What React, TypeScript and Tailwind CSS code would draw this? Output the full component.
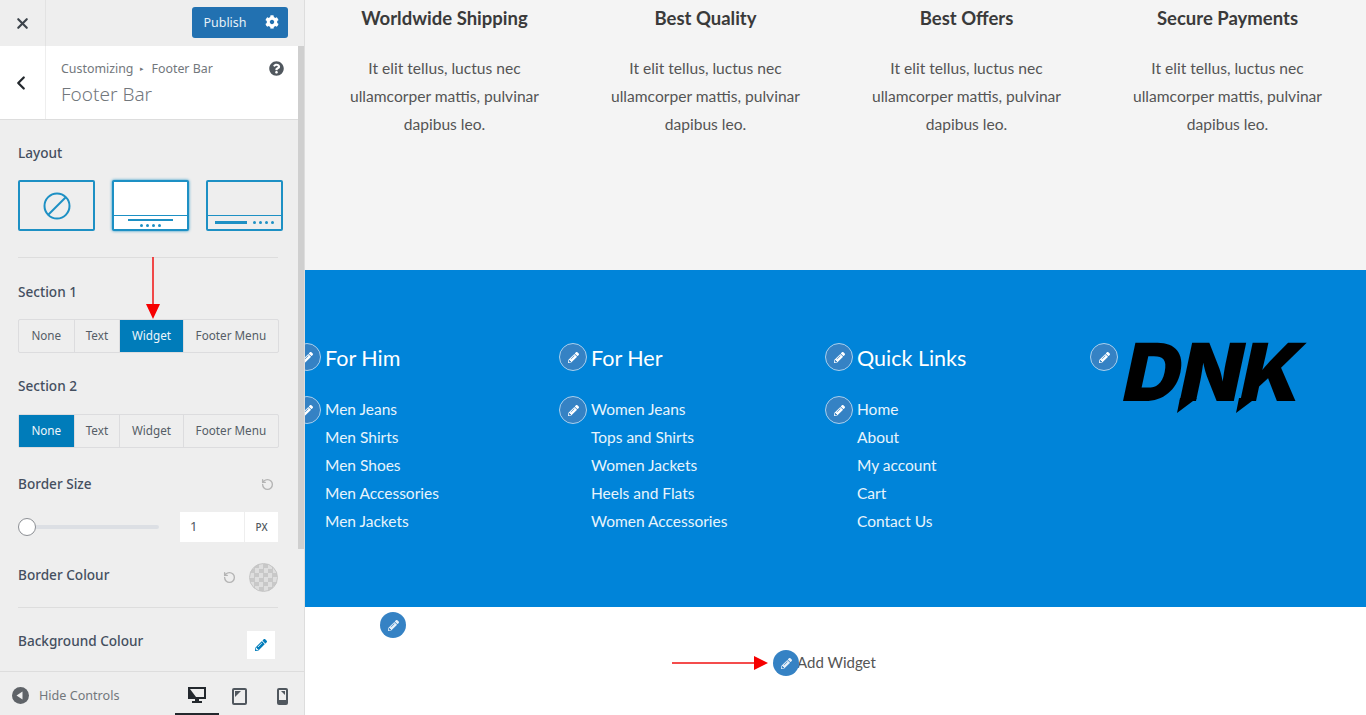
import React from 'react';
import { FaCog, FaPencilAlt, FaQuestionCircle } from 'react-icons/fa';
import { ChevronLeft, RotateCcw, X } from 'lucide-react';

const sideFont = { fontFamily: '"Noto Sans", sans-serif' };

const features = ['Worldwide Shipping', 'Best Quality', 'Best Offers', 'Secure Payments'];

const footerCols = [
  { title: 'For Him', links: ['Men Jeans', 'Men Shirts', 'Men Shoes', 'Men Accessories', 'Men Jackets'] },
  { title: 'For Her', links: ['Women Jeans', 'Tops and Shirts', 'Women Jackets', 'Heels and Flats', 'Women Accessories'] },
  { title: 'Quick Links', links: ['Home', 'About', 'My account', 'Cart', 'Contact Us'] },
];

const Segmented = ({ active }: { active: string }) => {
  const items = [
    { label: 'None', w: 'w-[55px]' },
    { label: 'Text', w: 'w-[46px]' },
    { label: 'Widget', w: 'w-[64px]' },
    { label: 'Footer Menu', w: 'w-[96px]' },
  ];
  return (
    <div className="flex h-[34px] w-[261px] rounded-[2px] border border-[#dcdcde] text-[11.7px]">
      {items.map((item, i) => (
        <div
          key={item.label}
          className={`${item.w} flex items-center justify-center ${i > 0 ? 'border-l border-[#dcdcde]' : ''} ${
            item.label === active ? 'bg-[#007cba] text-[#eef6fb]' : 'text-[#555d66]'
          }`}
        >
          {item.label}
        </div>
      ))}
    </div>
  );
};

const EditDot = ({ className }: { className: string }) => (
  <span className={`absolute flex h-[28px] w-[28px] items-center justify-center rounded-full border-[1.5px] border-[#a9d0ee] bg-[#3582c4] text-white ${className}`}>
    <FaPencilAlt size={11} />
  </span>
);

const PlainDot = ({ className }: { className: string }) => (
  <span className={`absolute flex h-[26px] w-[26px] items-center justify-center rounded-full bg-[#3582c4] text-[#e6f0f9] ${className}`}>
    <FaPencilAlt size={11} />
  </span>
);

const App = () => {
  return (
    <div className="relative flex h-[715px] w-[1366px] overflow-hidden bg-white">
      {/* customizer sidebar */}
      <aside className="relative flex h-full w-[305px] shrink-0 flex-col border-r border-[#dddddd] bg-[#eeeeee]" style={sideFont}>
        <div className="flex h-[46px] shrink-0 items-center">
          <div className="flex h-full w-[46px] items-center justify-center border-r border-[#e2e2e2] text-[#3c434a]">
            <X size={17} strokeWidth={3} />
          </div>
          <div className="mb-[2px] ml-auto mr-[16px] flex h-[31px] w-[96px] items-center rounded-[3px] bg-[#2271b1] text-[12.5px] text-[#e8f1f8]">
            <span className="mt-[3px] w-[66px] text-center">Publish</span>
            <FaCog size={14} className="ml-[7px] text-white" />
          </div>
        </div>

        <div className="flex min-h-0 flex-1">
          <div className="flex w-[298px] flex-col">
            <div className="flex h-[74px] shrink-0 border-b border-[#dddddd] bg-white">
              <div className="flex w-[46px] items-center justify-center border-r border-[#eeeeee] pr-[4px] text-[#23282d]">
                <ChevronLeft size={22} strokeWidth={2.5} />
              </div>
              <div className="relative flex-1 pl-[15px] pt-[13px] text-[#72777c]">
                <div className="flex items-center text-[12.4px] leading-[20px]">
                  Customizing
                  <span className="mx-[7px] text-[7px]">▸</span>
                  Footer Bar
                </div>
                <div className="mt-[2px] text-[19px] font-light leading-[26px]">Footer Bar</div>
                <FaQuestionCircle size={15} className="absolute right-[14px] top-[15px] text-[#50575e]" />
              </div>
            </div>

            <div className="pl-[18px] pt-[23px] text-[13.6px] text-[#444f5f]">
              <div className="font-medium leading-[20px]">Layout</div>
              <div className="mt-[17px] flex gap-[17px]">
                <div className="flex h-[51px] w-[77px] shrink-0 items-center justify-center rounded-[2px] border-2 border-[#1d90c4]">
                  <svg width="28" height="28" viewBox="0 0 28 28" fill="none" stroke="#1d90c4" strokeWidth="2">
                    <circle cx="14" cy="14" r="12.5" />
                    <path d="M5 23L23 5" />
                  </svg>
                </div>
                <div className="flex h-[51px] w-[77px] shrink-0 flex-col justify-end rounded-[2px] border-2 border-[#1d90c4] bg-white shadow-[0_0_3px_#1d90c4]">
                  <div className="flex h-[14px] flex-col items-center gap-[2px] border-t border-[#1d90c4] pt-[3px]">
                    <div className="h-[2px] w-[45px] bg-[#1d90c4]" />
                    <div className="mt-[1px] flex gap-[3px]">
                      {[0, 1, 2, 3].map((d) => <i key={d} className="h-[3px] w-[3px] rounded-full bg-[#1d90c4]" />)}
                    </div>
                  </div>
                </div>
                <div className="flex h-[51px] w-[77px] shrink-0 flex-col justify-end rounded-[2px] border-2 border-[#1d90c4]">
                  <div className="flex h-[14px] items-center justify-between border-t border-[#1d90c4] px-[7px]">
                    <div className="h-[3px] w-[32px] bg-[#1d90c4]" />
                    <div className="flex gap-[3px]">
                      {[0, 1, 2, 3].map((d) => <i key={d} className="h-[3px] w-[3px] rounded-full bg-[#1d90c4]" />)}
                    </div>
                  </div>
                </div>
              </div>

              <div className="mt-[26px] h-px w-[260px] bg-[#dddddd]" />

              <div className="mt-[24px] font-medium leading-[20px]">Section 1</div>
              <div className="mt-[17px]"><Segmented active="Widget" /></div>

              <div className="mt-[23px] font-medium leading-[20px]">Section 2</div>
              <div className="mt-[18px]"><Segmented active="None" /></div>

              <div className="mt-[26px] flex w-[256px] items-center justify-between font-medium leading-[20px]">
                Border Size
                <RotateCcw size={13} strokeWidth={2.5} className="text-[#b4b4b4]" />
              </div>
              <div className="mt-[18px] flex w-[260px] items-center">
                <div className="relative h-[4px] w-[141px] rounded bg-[#dcdfe4]">
                  <span className="absolute left-0 top-[-7px] h-[18px] w-[18px] rounded-full border border-[#8c8f94] bg-white" />
                </div>
                <div className="ml-[21px] flex h-[30px] w-[98px] bg-white text-[13px] text-[#50575e]">
                  <div className="flex w-[65px] items-center border-r border-[#eeeeee] pl-[10px]">1</div>
                  <div className="flex flex-1 items-center justify-center text-[10px] font-medium">PX</div>
                </div>
              </div>

              <div className="mt-[21px] flex w-[260px] items-center font-medium">
                <span className="mb-[4px]">Border Colour</span>
                <RotateCcw size={13} strokeWidth={2.5} className="ml-auto mr-[13px] text-[#b4b4b4]" />
                <span className="h-[29px] w-[29px] rounded-full border border-[#c4c4c4] bg-[repeating-conic-gradient(#c8c8c8_0%_25%,#dedede_0%_50%)] bg-[length:9px_9px]" />
              </div>
              <div className="mt-[15px] h-px w-[260px] bg-[#dddddd]" />
              <div className="mt-[23px] flex w-[257px] items-center justify-between font-medium">
                <span className="mb-[8px]">Background Colour</span>
                <span className="flex h-[28px] w-[28px] items-center justify-center bg-white text-[#007cba]">
                  <FaPencilAlt size={12} />
                </span>
              </div>
            </div>
          </div>
          <div className="w-[6px] bg-[#eeeeee]">
            <div className="h-[503px] bg-[#cfcfcf]" />
          </div>
        </div>

        {/* bottom controls */}
        <div className="absolute bottom-0 left-0 flex h-[44px] w-[304px] items-center border-t border-[#dddddd] bg-[#eeeeee]">
          <svg width="17" height="17" viewBox="0 0 17 17" className="ml-[12px] mt-[3px]">
            <circle cx="8.5" cy="8.5" r="8.5" fill="#5f6368" />
            <path d="M10.5 4.5v8L4.5 8.5z" fill="#eeeeee" />
          </svg>
          <span className="ml-[10px] mt-[5px] text-[12.6px] text-[#72777c]">Hide Controls</span>
          <div className="ml-auto flex h-full">
            <div className="flex w-[44px] items-center justify-center border-b-2 border-[#23282d] pt-[5px]">
              <svg width="18" height="17" viewBox="0 0 18 17">
                <path d="M0 0h18v12H11v2h3v2H4v-2h3v-2H0z" fill="#23282d" />
                <path d="M2 2h14v8H8z" fill="#eeeeee" />
              </svg>
            </div>
            <div className="flex w-[42px] items-center justify-center pr-[2px] pt-[5px]">
              <svg width="15" height="17" viewBox="0 0 15 17">
                <rect x="1" y="1" width="13" height="15" rx="1" fill="none" stroke="#50575e" strokeWidth="2" />
                <path d="M3 3h6l-6 6z" fill="#50575e" />
              </svg>
            </div>
            <div className="flex w-[43px] items-center justify-center pt-[5px]">
              <svg width="11" height="17" viewBox="0 0 11 17">
                <rect x="0" y="0" width="11" height="17" rx="2" fill="#50575e" />
                <rect x="2" y="2" width="7" height="10" fill="#eeeeee" />
                <path d="M4 3h4v4z" fill="#50575e" />
              </svg>
            </div>
          </div>
        </div>
      </aside>

      {/* site preview */}
      <main className="relative flex h-full flex-1 flex-col overflow-hidden" style={{ fontFamily: 'Lato, sans-serif' }}>
        <section className="h-[270px] shrink-0 bg-[#f4f4f4] pl-[9px] pr-[8px] pt-[6px]">
          <div className="grid grid-cols-4">
            {features.map((title) => (
              <div key={title} className="text-center">
                <h3 className="text-[18.5px] font-bold leading-[24px] text-[#3a3a3a]">{title}</h3>
                <p className="mx-auto mt-[24px] w-[200px] text-[15.6px] leading-[28px] text-[#555555]">
                  It elit tellus, luctus nec ullamcorper mattis, pulvinar dapibus leo.
                </p>
              </div>
            ))}
          </div>
        </section>

        <section className="grid h-[337px] shrink-0 grid-cols-[266px_266px_266px_1fr] bg-[#0084d9] pl-[20px] pt-[74px] text-white">
          {footerCols.map((col) => (
            <div key={col.title} className="relative">
              <EditDot className="left-[-32px] top-[-1px]" />
              <EditDot className="left-[-32px] top-[52px]" />
              <h4 className="text-[21.5px] leading-[28px]">{col.title}</h4>
              <ul className="mt-[23px] text-[15.5px] leading-[28px] text-[#e8f4fc]">
                {col.links.map((link) => <li key={link}>{link}</li>)}
              </ul>
            </div>
          ))}
          <div className="relative">
            <EditDot className="left-[-33px] top-[-1px]" />
            <div className="relative -mt-[3px] h-[74px] w-[185px]">
              <span
                className="block origin-top-left -skew-x-12 pl-[9px] text-[80px] font-black leading-[62px] tracking-[-1px] text-black"
                style={{ fontFamily: 'Inter, sans-serif' }}
              >
                DNK
              </span>
              <svg width="185" height="74" viewBox="0 0 185 74" className="absolute left-0 top-0">
                <path d="M57 57h17l-20 15zM116 57h17l-20 15z" fill="#000" />
              </svg>
            </div>
          </div>
        </section>

        <section className="relative flex-1 bg-white pl-[492px] pt-[45px] text-[15px] leading-[20px] text-[#555555]">
          <PlainDot className="left-[75px] top-[5px]" />
          <PlainDot className="left-[468px] top-[43px]" />
          Add Widget
        </section>
      </main>

      {/* red annotation arrows */}
      <svg width="16" height="63" viewBox="0 0 16 63" className="absolute left-[145px] top-[257px]">
        <path d="M8 0v48" stroke="#f01010" strokeWidth="1.5" />
        <path d="M1 47h14l-7 15z" fill="#f60000" />
      </svg>
      <svg width="97" height="16" viewBox="0 0 97 16" className="absolute left-[672px] top-[655px]">
        <path d="M0 8h84" stroke="#f01010" strokeWidth="1.5" />
        <path d="M82 1v14l14-7z" fill="#f60000" />
      </svg>
    </div>
  );
};

export default App;
